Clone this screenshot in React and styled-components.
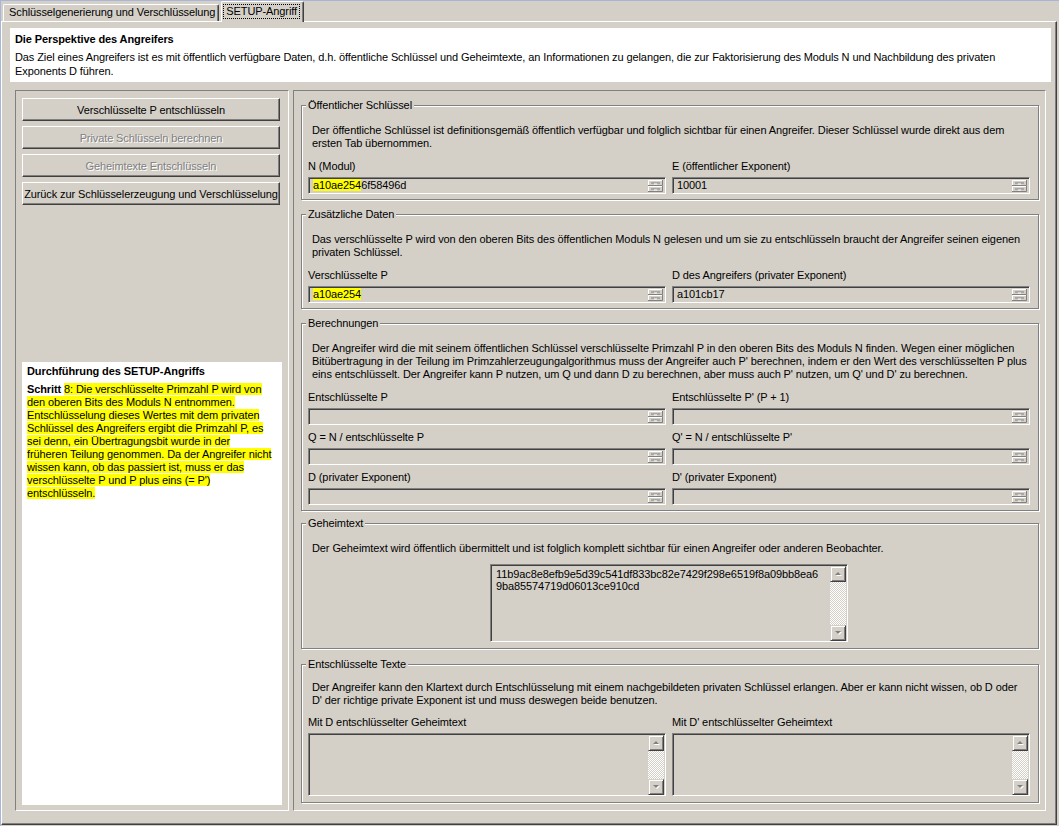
import React from "react";
import styled, { createGlobalStyle, css } from "styled-components";

const GlobalStyle = createGlobalStyle`
  html, body { margin: 0; padding: 0; }
  body {
    background: #d4d0c8;
    font-family: "Liberation Sans", Arial, sans-serif;
    font-size: 11px;
    letter-spacing: -0.1px;
    color: #000;
  }
  * { box-sizing: border-box; }
`;

const Window = styled.div`
  width: 1059px;
  height: 826px;
  border-top: 1px solid #a7b6d6;
  border-left: 1px solid #a7b6d6;
  display: flex;
  flex-direction: column;
  overflow: hidden;
`;

const TabStrip = styled.div`
  display: flex;
  align-items: flex-end;
  height: 20px;
  padding-left: 2px;
  position: relative;
  z-index: 1;
`;

const Tab = styled.div`
  height: 17px;
  line-height: 15px;
  padding: 0 3px 0 5px;
  background: #d4d0c8;
  border-top: 1px solid #fff;
  border-left: 1px solid #fff;
  border-right: 1px solid #404040;
  box-shadow: inset -1px 0 0 #808080;
  border-radius: 2px 2px 0 0;
  white-space: nowrap;
  ${(p) =>
    p.$active &&
    css`
      height: 21px;
      margin-bottom: -1px;
      margin-left: 2px;
      padding: 2px 3px 0 1px;
      line-height: 14px;
    `}
`;

const Focus = styled.span`
  display: inline-block;
  border: 1px dotted #000;
  padding: 0 2px;
  line-height: 13px;
`;

const TabPanel = styled.div`
  height: 804px;
  margin-right: 2px;
  border: 1px solid;
  border-color: #fff #404040 #404040 #fff;
  box-shadow: inset -1px -1px 0 #808080;
  padding: 6px 5px 0 8px;
`;

const Header = styled.div`
  background: #fff;
  height: 54px;
  padding: 5px 6px 0 5px;
`;

const HeaderTitle = styled.div`
  font-weight: bold;
  line-height: 13px;
  margin-bottom: 4px;
`;

const HeaderText = styled.div`
  line-height: 14px;
`;

const Body = styled.div`
  display: flex;
  gap: 4px;
  height: 721px;
  margin: 8px 5px 0 5px;
`;

const sunken = css`
  border: 1px solid;
  border-color: #808080 #fff #fff #808080;
`;

const LeftPanel = styled.div`
  ${sunken}
  width: 274px;
  flex: none;
  display: flex;
  flex-direction: column;
  padding: 7px 0 0 6px;
`;

const Button = styled.div`
  width: 258px;
  height: 23px;
  margin-bottom: 5px;
  display: flex;
  align-items: center;
  justify-content: center;
  border: 1px solid;
  border-color: #fff #404040 #404040 #fff;
  box-shadow: inset -1px -1px 0 #808080;
  color: ${(p) => (p.$disabled ? "#808080" : "#000")};
  text-shadow: ${(p) => (p.$disabled ? "1px 1px 0 #fff" : "none")};
  white-space: nowrap;
`;

const InfoBox = styled.div`
  margin-top: auto;
  margin-bottom: 5px;
  width: 260px;
  height: 443px;
  background: #fff;
  padding: 3px 5px;
`;

const InfoTitle = styled.div`
  font-weight: bold;
  line-height: 13px;
  margin-bottom: 5px;
`;

const InfoText = styled.div`
  line-height: 13px;
  white-space: nowrap;
`;

const Bold = styled.b``;

const Hl = styled.span`
  background: #ffff00;
`;

const RightPanel = styled.div`
  ${sunken}
  flex: 1;
  padding: 8px 6px 0 7px;
`;

const Group = styled.fieldset`
  margin: 0 0 ${(p) => p.$gap ?? 8}px;
  border: 1px solid #808080;
  box-shadow: 1px 1px 0 #fff, inset 1px 1px 0 #fff;
  padding: ${(p) => p.$pt ?? 12}px 8px ${(p) => p.$pb ?? 5}px 6px;
  min-width: 0;
`;

const Legend = styled.legend`
  padding: 0 2px;
  margin-left: -2px;
  line-height: 13px;
  background: #d4d0c8;
`;

const Desc = styled.div`
  padding-left: 4px;
  line-height: 13px;
  margin-bottom: ${(p) => p.$mb ?? 10}px;
`;

const FieldGrid = styled.div`
  display: grid;
  grid-template-columns: 1fr 1fr;
  column-gap: 6px;
  row-gap: 6px;
`;

const Label = styled.div`
  line-height: 13px;
  margin-bottom: 4px;
  white-space: nowrap;
`;

const Input = styled.div`
  ${sunken}
  box-shadow: inset 1px 1px 0 #404040;
  height: 17px;
  display: flex;
  align-items: center;
  padding: 0 2px 0 4px;
  white-space: nowrap;
  overflow: hidden;
`;

const InputValue = styled.span`
  flex: 1;
  line-height: 13px;
`;

const TextBox = styled.div`
  ${sunken}
  box-shadow: inset 1px 1px 0 #404040;
  display: flex;
  height: ${(p) => p.$h}px;
  width: ${(p) => (p.$w ? `${p.$w}px` : "auto")};
  margin: ${(p) => (p.$center ? "0 auto" : "0")};
  padding: 1px 1px 0 1px;
`;

const TextContent = styled.div`
  flex: 1;
  padding: 2px 4px;
  line-height: 12px;
  overflow: hidden;
  white-space: nowrap;
`;

const Scrollbar = styled.div`
  width: 16px;
  display: flex;
  flex-direction: column;
`;

const ScrollBtn = styled.div`
  width: 16px;
  height: 16px;
  display: flex;
  align-items: center;
  justify-content: center;
  background: #d4d0c8;
  border: 1px solid;
  border-color: #d4d0c8 #404040 #404040 #d4d0c8;
  box-shadow: inset 1px 1px 0 #fff, inset -1px -1px 0 #808080;
`;

const Track = styled.div`
  flex: 1;
  background: repeating-conic-gradient(#fff 0 25%, #d4d0c8 0 50%) 0 0 / 2px 2px;
`;

function Spinner() {
  return (
    <svg width="15" height="12" viewBox="0 0 15 12">
      <rect width="15" height="12" fill="#d4d0c8" />
      <path d="M0.5 5V0.5H14" stroke="#fff" fill="none" />
      <path d="M0 5.5H14.5V0" stroke="#808080" fill="none" />
      <path d="M0.5 11V6.5H14" stroke="#fff" fill="none" />
      <path d="M0 11.5H14.5V6" stroke="#808080" fill="none" />
      <rect x="3" y="2.5" width="9" height="1" fill="#808080" />
      <rect x="3" y="8.5" width="9" height="1" fill="#808080" />
      <rect x="6" y="3.5" width="3" height="1" fill="#fff" />
      <rect x="6" y="9.5" width="3" height="1" fill="#fff" />
    </svg>
  );
}

function Arrow({ down }) {
  return (
    <svg width="9" height="6" viewBox="0 0 9 6">
      {down ? (
        <>
          <path d="M2 2h6l-3 3z" fill="#fff" />
          <path d="M1 1h6l-3 3z" fill="#808080" />
        </>
      ) : (
        <>
          <path d="M2 5h6l-3-3z" fill="#fff" />
          <path d="M1 4h6l-3-3z" fill="#808080" />
        </>
      )}
    </svg>
  );
}

function Field({ label, children }) {
  return (
    <div>
      <Label>{label}</Label>
      <Input>
        <InputValue>{children}</InputValue>
        <Spinner />
      </Input>
    </div>
  );
}

function ScrollText({ h, w, center, children }) {
  return (
    <TextBox $h={h} $w={w} $center={center}>
      <TextContent>{children}</TextContent>
      <Scrollbar>
        <ScrollBtn>
          <Arrow />
        </ScrollBtn>
        <Track />
        <ScrollBtn>
          <Arrow down />
        </ScrollBtn>
      </Scrollbar>
    </TextBox>
  );
}

const stepLines = [
  "den oberen Bits des Moduls N entnommen.",
  "Entschlüsselung dieses Wertes mit dem privaten",
  "Schlüssel des Angreifers ergibt die Primzahl P, es",
  "sei denn, ein Übertragungsbit wurde in der",
  "früheren Teilung genommen. Da der Angreifer nicht",
  "wissen kann, ob das passiert ist, muss er das",
  "verschlüsselte P und P plus eins (= P')",
  "entschlüsseln.",
];

export default function App() {
  return (
    <>
      <GlobalStyle />
      <Window>
        <TabStrip>
          <Tab>Schlüsselgenerierung und Verschlüsselung</Tab>
          <Tab $active>
            <Focus>SETUP-Angriff</Focus>
          </Tab>
        </TabStrip>
        <TabPanel>
          <Header>
            <HeaderTitle>Die Perspektive des Angreifers</HeaderTitle>
            <HeaderText>
              Das Ziel eines Angreifers ist es mit öffentlich verfügbare Daten, d.h. öffentliche Schlüssel und
              Geheimtexte, an Informationen zu gelangen, die zur Faktorisierung des Moduls N und Nachbildung des
              privaten Exponents D führen.
            </HeaderText>
          </Header>
          <Body>
            <LeftPanel>
              <Button>Verschlüsselte P entschlüsseln</Button>
              <Button $disabled>Private Schlüsseln berechnen</Button>
              <Button $disabled>Geheimtexte Entschlüsseln</Button>
              <Button>Zurück zur Schlüsselerzeugung und Verschlüsselung</Button>
              <InfoBox>
                <InfoTitle>Durchführung des SETUP-Angriffs</InfoTitle>
                <InfoText>
                  <Bold>Schritt </Bold>
                  <Hl>8: Die verschlüsselte Primzahl P wird von</Hl>
                  {stepLines.map((line) => (
                    <React.Fragment key={line}>
                      <br />
                      <Hl>{line}</Hl>
                    </React.Fragment>
                  ))}
                </InfoText>
              </InfoBox>
            </LeftPanel>
            <RightPanel>
              <Group $gap={8}>
                <Legend>Öffentlicher Schlüssel</Legend>
                <Desc>
                  Der öffentliche Schlüssel ist definitionsgemäß öffentlich verfügbar und folglich sichtbar für einen
                  Angreifer. Dieser Schlüssel wurde direkt aus dem ersten Tab übernommen.
                </Desc>
                <FieldGrid>
                  <Field label="N (Modul)">
                    <Hl>a10ae254</Hl>6f58496d
                  </Field>
                  <Field label="E (öffentlicher Exponent)">10001</Field>
                </FieldGrid>
              </Group>
              <Group $gap={8}>
                <Legend>Zusätzliche Daten</Legend>
                <Desc>
                  Das verschlüsselte P wird von den oberen Bits des öffentlichen Moduls N gelesen und um sie zu
                  entschlüsseln braucht der Angreifer seinen eigenen privaten Schlüssel.
                </Desc>
                <FieldGrid>
                  <Field label="Verschlüsselte P">
                    <Hl>a10ae254</Hl>
                  </Field>
                  <Field label="D des Angreifers (privater Exponent)">a101cb17</Field>
                </FieldGrid>
              </Group>
              <Group $gap={6}>
                <Legend>Berechnungen</Legend>
                <Desc>
                  Der Angreifer wird die mit seinem öffentlichen Schlüssel verschlüsselte Primzahl P in den oberen
                  Bits des Moduls N finden. Wegen einer möglichen Bitübertragung in der Teilung im
                  Primzahlerzeugungalgorithmus muss der Angreifer auch P' berechnen, indem er den Wert des
                  verschlüsselten P plus eins entschlüsselt. Der Angreifer kann P nutzen, um Q und dann D zu
                  berechnen, aber muss auch P' nutzen, um Q' und D' zu berechnen.
                </Desc>
                <FieldGrid>
                  <Field label="Entschlüsselte P" />
                  <Field label="Entschlüsselte P' (P + 1)" />
                  <Field label="Q = N / entschlüsselte P" />
                  <Field label="Q' = N / entschlüsselte P'" />
                  <Field label="D (privater Exponent)" />
                  <Field label="D' (privater Exponent)" />
                </FieldGrid>
              </Group>
              <Group $gap={9} $pb={6}>
                <Legend>Geheimtext</Legend>
                <Desc $mb={9}>
                  Der Geheimtext wird öffentlich übermittelt und ist folglich komplett sichtbar für einen Angreifer
                  oder anderen Beobachter.
                </Desc>
                <ScrollText h={78} w={358} center>
                  11b9ac8e8efb9e5d39c541df833bc82e7429f298e6519f8a09bb8ea6
                  <br />
                  9ba85574719d06013ce910cd
                </ScrollText>
              </Group>
              <Group $gap={0} $pt={10} $pb={6}>
                <Legend>Entschlüsselte Texte</Legend>
                <Desc $mb={9}>
                  Der Angreifer kann den Klartext durch Entschlüsselung mit einem nachgebildeten privaten Schlüssel
                  erlangen. Aber er kann nicht wissen, ob D oder D' der richtige private Exponent ist und muss
                  deswegen beide benutzen.
                </Desc>
                <FieldGrid>
                  <div>
                    <Label>Mit D entschlüsselter Geheimtext</Label>
                    <ScrollText h={63} />
                  </div>
                  <div>
                    <Label>Mit D' entschlüsselter Geheimtext</Label>
                    <ScrollText h={63} />
                  </div>
                </FieldGrid>
              </Group>
            </RightPanel>
          </Body>
        </TabPanel>
      </Window>
    </>
  );
}
